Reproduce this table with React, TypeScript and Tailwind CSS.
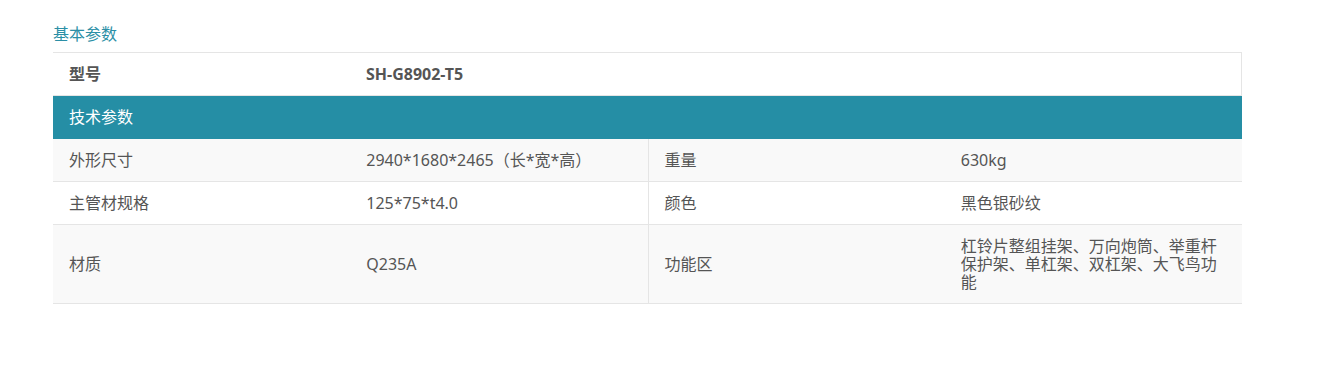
const specs = [
  { label: "外形尺寸", value: "2940*1680*2465（长*宽*高）", label2: "重量", value2: "630kg", shaded: true },
  { label: "主管材规格", value: "125*75*t4.0", label2: "颜色", value2: "黑色银砂纹", shaded: false },
  {
    label: "材质",
    value: "Q235A",
    label2: "功能区",
    value2: "杠铃片整组挂架、万向炮筒、举重杆保护架、单杠架、双杠架、大飞鸟功能",
    shaded: true,
  },
];

function Cell({ children, divider = false }: { children: React.ReactNode; divider?: boolean }) {
  return (
    <div className={`flex items-center px-4 py-3 leading-[18px] ${divider ? "border-l border-[#e5e5e5]" : ""}`}>
      <span className="min-w-0">{children}</span>
    </div>
  );
}

export default function App() {
  return (
    <div className="min-h-[369px] bg-white pl-[53px] pt-[24px] font-['Noto_Sans','Noto_Sans_CJK_SC',sans-serif] text-base text-[#555]">
      <h2 className="mb-[8px] text-base leading-5 font-normal text-[#2b8fa6]">基本参数</h2>

      <div className="w-[1189px]">
        {/* model row */}
        <div className="grid grid-cols-4 border-y border-r border-[#e5e5e5] bg-white font-bold">
          <Cell>型号</Cell>
          <Cell>SH-G8902-T5</Cell>
          <div />
          <div />
        </div>

        {/* section header */}
        <div className="bg-[#258ea5] px-4 pt-3 pb-[13px] leading-[18px] text-white">技术参数</div>

        {specs.map((row) => (
          <div
            key={row.label}
            className={`grid grid-cols-4 border-b border-[#e5e5e5] ${row.shaded ? "bg-[#f9f9f9]" : "bg-white"}`}
          >
            <Cell>{row.label}</Cell>
            <Cell>{row.value}</Cell>
            <Cell divider>{row.label2}</Cell>
            <Cell>{row.value2}</Cell>
          </div>
        ))}
      </div>
    </div>
  );
}
